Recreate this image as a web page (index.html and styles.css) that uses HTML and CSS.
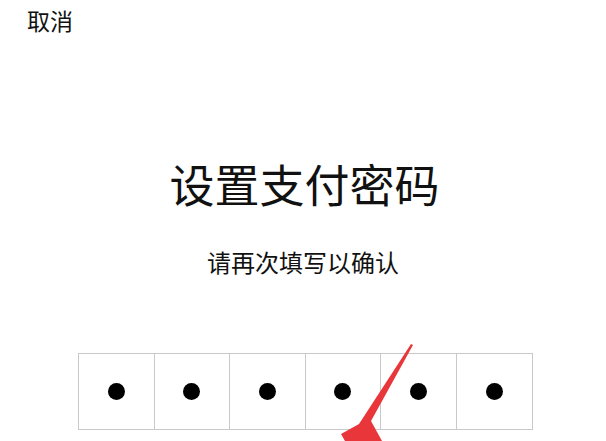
FILE: index.html
```html
<!DOCTYPE html>
<html lang="zh">
<head>
<meta charset="utf-8">
<link rel="stylesheet" href="styles.css">
</head>
<body>
<div class="page">
  <div class="topbar"><span class="cancel">取消</span></div>
  <h1 class="title">设置支付密码</h1>
  <p class="subtitle">请再次填写以确认</p>
  <div class="pin">
    <div class="cell"><span class="dot"></span></div>
    <div class="cell"><span class="dot"></span></div>
    <div class="cell"><span class="dot"></span></div>
    <div class="cell"><span class="dot"></span></div>
    <div class="cell"><span class="dot"></span></div>
    <div class="cell"><span class="dot"></span></div>
  </div>
  <svg class="arrow" width="606" height="441" viewBox="0 0 606 441">
    <polygon points="411,344 413,345 371,421 382,441 345,441 341,434 359,424" fill="#e8363a"/>
  </svg>
</div>
</body>
</html>
```

FILE: styles.css
```css
* { box-sizing: border-box; }
html, body { margin: 0; padding: 0; background: #fff; }
body {
  font-family: "Noto Sans CJK SC", "Noto Sans", sans-serif;
  color: #111;
  width: 606px;
  height: 441px;
  overflow: hidden;
}
.page { position: relative; width: 606px; height: 441px; }
.topbar {
  padding: 8px 0 0 27px;
  height: 40px;
}
.cancel {
  display: block;
  font-size: 23px;
  line-height: 24px;
}
.title {
  margin: 121px 0 0 0;
  font-size: 45px;
  line-height: 45px;
  font-weight: 400;
  text-align: center;
  padding-left: 3px;
}
.subtitle {
  margin: 44px 0 0 0;
  font-size: 24px;
  line-height: 24px;
  text-align: center;
}
.pin {
  margin: 79px 0 0 78px;
  width: 455px;
  height: 77px;
  display: grid;
  grid-template-columns: repeat(6, 1fr);
  border: 1px solid #c9c9c9;
}
.cell {
  border-right: 1px solid #c9c9c9;
  display: flex;
  align-items: center;
  justify-content: center;
}
.cell:last-child { border-right: none; }
.dot {
  width: 17px;
  height: 17px;
  border-radius: 50%;
  background: #000;
}
.arrow { position: absolute; left: 0; top: 0; pointer-events: none; }
```
